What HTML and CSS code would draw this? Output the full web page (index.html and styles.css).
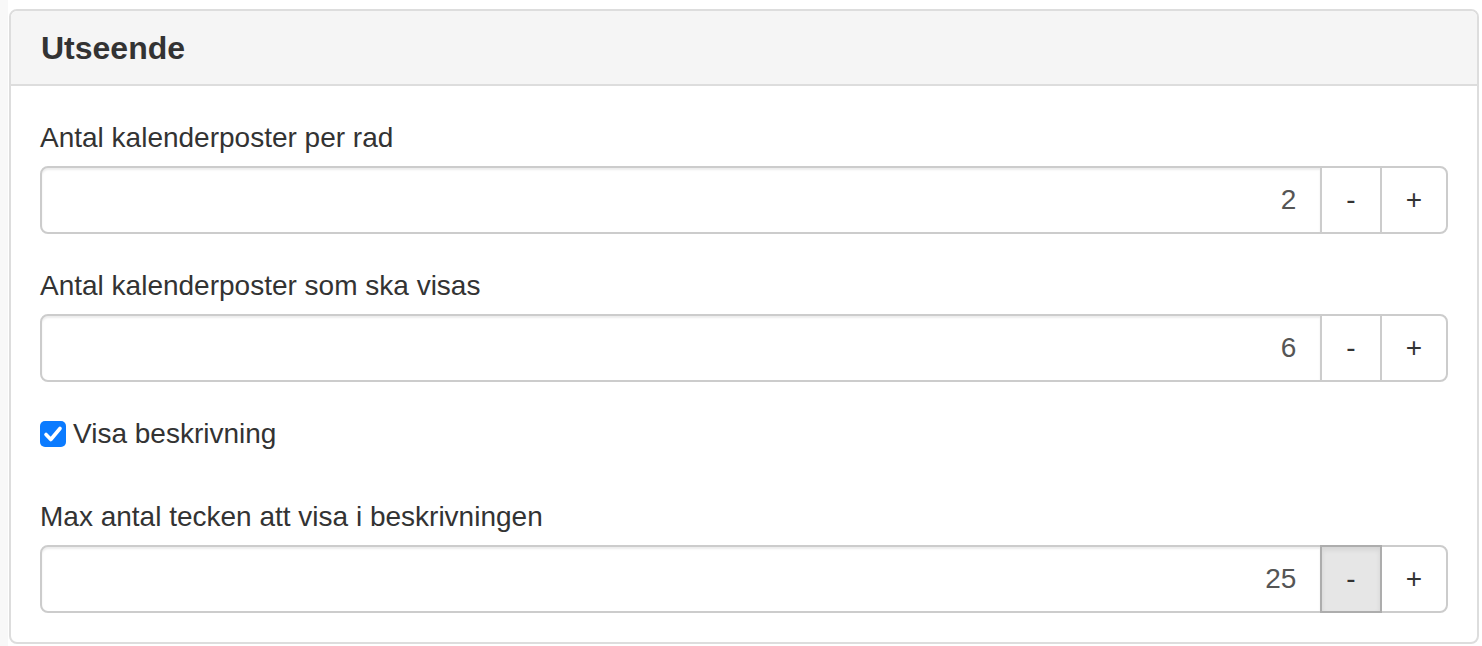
FILE: index.html
```html
<!DOCTYPE html>
<html lang="sv">
<head>
    <meta charset="UTF-8">
    <meta name="viewport" content="width=device-width, initial-scale=1.0">
    <title>Utseende</title>
    <link rel="stylesheet" href="styles.css">
</head>
<body>
    <div class="panel">
        <div class="panel-heading">
            <h3 class="panel-title">Utseende</h3>
        </div>
        <div class="panel-body">
            <div class="form-group">
                <label for="perRow">Antal kalenderposter per rad</label>
                <div class="input-group">
                    <input type="text" id="perRow" class="form-control" value="2">
                    <button class="btn">-</button>
                    <button class="btn btn-last">+</button>
                </div>
            </div>
            <div class="form-group">
                <label for="count">Antal kalenderposter som ska visas</label>
                <div class="input-group">
                    <input type="text" id="count" class="form-control" value="6">
                    <button class="btn">-</button>
                    <button class="btn btn-last">+</button>
                </div>
            </div>
            <div class="checkbox">
                <span class="check-box">
                    <svg viewBox="0 0 26 26" width="26" height="26">
                        <path d="M6 13.5 L10.8 18.5 L20 7.5" fill="none" stroke="#fff" stroke-width="3.6" stroke-linecap="round" stroke-linejoin="round"/>
                    </svg>
                </span>
                <span class="check-label">Visa beskrivning</span>
            </div>
            <div class="form-group last">
                <label for="maxChars">Max antal tecken att visa i beskrivningen</label>
                <div class="input-group">
                    <input type="text" id="maxChars" class="form-control" value="25">
                    <button class="btn active">-</button>
                    <button class="btn btn-last">+</button>
                </div>
            </div>
        </div>
    </div>
</body>
</html>
```

FILE: styles.css
```css
body {
    margin: 0;
    border-left: 8px solid #f8f8f8;
    background: #fff;
    font-family: "Liberation Sans", Arial, sans-serif;
    font-size: 28px;
    color: #333;
    height: 646px;
    overflow: hidden;
}

.panel {
    margin: 9px 3px 0 1px;
    border: 2px solid #ddd;
    border-radius: 8px;
    background: #fff;
}

.panel-heading {
    background: #f5f5f5;
    border-bottom: 2px solid #ddd;
    border-radius: 6px 6px 0 0;
    padding: 20px 30px 18px;
}

.panel-title {
    margin: 0;
    font-size: 32px;
    line-height: 1.1;
    font-weight: bold;
    color: #333;
}

.panel-body {
    padding: 32px 29px 29px 29px;
}

.form-group {
    margin-bottom: 32px;
}

.form-group.last {
    margin-bottom: 0;
}

.form-group label {
    display: block;
    line-height: 40px;
    margin-bottom: 8px;
}

.input-group {
    display: flex;
    height: 68px;
}

.form-control {
    flex: 1;
    min-width: 0;
    box-sizing: border-box;
    height: 68px;
    margin: 0;
    padding: 0 24px;
    border: 2px solid #ccc;
    border-radius: 8px 0 0 8px;
    font-family: inherit;
    font-size: 28px;
    color: #555;
    text-align: right;
    background: #fff;
    box-shadow: inset 0 2px 2px rgba(0, 0, 0, 0.075);
}

.btn {
    box-sizing: border-box;
    height: 68px;
    margin: 0 0 0 -2px;
    padding: 0 24px;
    border: 2px solid #ccc;
    background: #fff;
    font-family: inherit;
    font-size: 28px;
    color: #333;
    cursor: pointer;
}

.btn.active {
    background: #e6e6e6;
    border-color: #adadad;
    box-shadow: inset 0 3px 5px rgba(0, 0, 0, 0.08);
    position: relative;
}

.btn-last {
    border-radius: 0 8px 8px 0;
}

.checkbox {
    display: flex;
    align-items: center;
    height: 40px;
    margin: 32px 0 43px;
}

.check-box {
    width: 26px;
    height: 26px;
    border-radius: 5px;
    background: #0b7bff;
    display: flex;
    margin-right: 7px;
}

.check-label {
    line-height: 40px;
}
```
